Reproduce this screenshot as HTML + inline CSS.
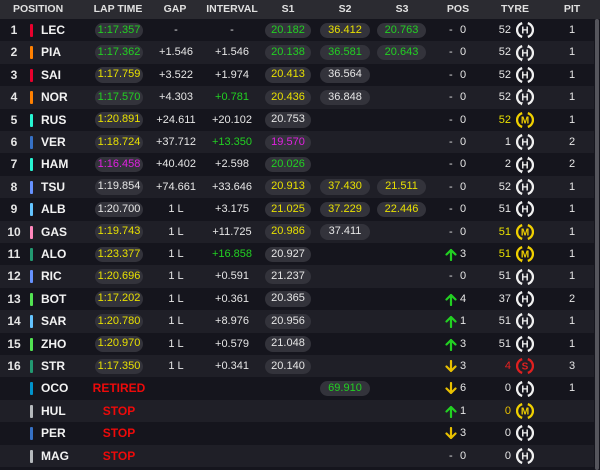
<!DOCTYPE html>
<html><head><meta charset="utf-8"><style>
*{margin:0;padding:0;box-sizing:border-box}
body{width:600px;height:470px;background:#15151d;font-family:"Liberation Sans",sans-serif;color:#e6e6e6;overflow:hidden;position:relative;font-size:11px}
.hdr{position:absolute;left:0;top:0;width:600px;height:19px;background:#2b2b31;font-weight:bold;font-size:10.5px;color:#e0e0e0}
.row{position:absolute;left:0;width:594px;height:22.4px}
.row.a{background:#15151d}.row.b{background:#1f1f27}
.c{position:absolute;top:0;height:100%;line-height:22.4px;white-space:nowrap}
.ctr{text-align:center}
.pill{position:absolute;top:3.5px;height:15.5px;line-height:15.5px;border-radius:8px;background:#33333b;text-align:center}
.bar{position:absolute;left:30px;top:5px;width:3px;height:13px;border-radius:1px}
.nm{left:41px;font-weight:bold;font-size:12px;color:#f2f2f2}
.num{left:5px;width:18px;text-align:center;font-weight:bold;font-size:12px}
.g{color:#22d022}.y{color:#e8e000}.p{color:#e020e0}.r{color:#e82020}.o{color:#e8c000}
.st{color:#ee0a0a;font-weight:bold;font-size:12px}
svg.t{position:absolute;top:2.2px;left:516px}
svg.ar{position:absolute;top:5px;left:445px}
.sb{position:absolute;left:595px;top:19px;width:4px;height:451px;background:#55555c;border-radius:2px}
</style></head><body>
<div class="hdr">
<span class="c" style="left:13px;line-height:19px">POSITION</span>
<span class="c ctr" style="left:88px;width:60px;line-height:19px">LAP TIME</span>
<span class="c ctr" style="left:150px;width:50px;line-height:19px">GAP</span>
<span class="c ctr" style="left:202px;width:60px;line-height:19px">INTERVAL</span>
<span class="c ctr" style="left:268px;width:40px;line-height:19px">S1</span>
<span class="c ctr" style="left:325px;width:40px;line-height:19px">S2</span>
<span class="c ctr" style="left:382px;width:40px;line-height:19px">S3</span>
<span class="c ctr" style="left:438px;width:40px;line-height:19px">POS</span>
<span class="c ctr" style="left:495px;width:40px;line-height:19px">TYRE</span>
<span class="c ctr" style="left:552px;width:40px;line-height:19px">PIT</span>
</div>
<div id="rows"></div>
<div class="sb"></div>
<script>
var D=[
["1","#e8002d","LEC","g:1:17.357","-","-","g:20.182","y:36.412","g:20.763","-","0","52","H",0,"1"],
["2","#ff8000","PIA","g:1:17.362","+1.546","+1.546","g:20.138","g:36.581","g:20.643","-","0","52","H",1,"1"],
["3","#e8002d","SAI","y:1:17.759","+3.522","+1.974","y:20.413","w:36.564","","-","0","52","H",0,"1"],
["4","#ff8000","NOR","g:1:17.570","+4.303","g:+0.781","y:20.436","w:36.848","","-","0","52","H",1,"1"],
["5","#27f4d2","RUS","y:1:20.891","+24.611","+20.102","w:20.753","","","-","0","y:52","M",0,"1"],
["6","#3671c6","VER","y:1:18.724","+37.712","g:+13.350","p:19.570","","","-","0","1","H",0,"2"],
["7","#27f4d2","HAM","p:1:16.458","+40.402","+2.598","g:20.026","","","-","0","2","H",1,"2"],
["8","#6692ff","TSU","w:1:19.854","+74.661","+33.646","y:20.913","y:37.430","y:21.511","-","0","52","H",0,"1"],
["9","#64c4ff","ALB","w:1:20.700","1 L","+3.175","y:21.025","y:37.229","y:22.446","-","0","51","H",0,"1"],
["10","#ff87bc","GAS","y:1:19.743","1 L","+11.725","y:20.986","w:37.411","","-","0","y:51","M",0,"1"],
["11","#229971","ALO","y:1:23.377","1 L","g:+16.858","w:20.927","","","u","3","y:51","M",1,"1"],
["12","#6692ff","RIC","y:1:20.696","1 L","+0.591","w:21.237","","","-","0","51","H",0,"1"],
["13","#52e252","BOT","y:1:17.202","1 L","+0.361","w:20.365","","","u","4","37","H",0,"2"],
["14","#64c4ff","SAR","y:1:20.780","1 L","+8.976","w:20.956","","","u","1","51","H",0,"1"],
["15","#52e252","ZHO","y:1:20.970","1 L","+0.579","w:21.048","","","u","3","51","H",0,"1"],
["16","#229971","STR","y:1:17.350","1 L","+0.341","w:20.140","","","d","3","r:4","S",0,"3"],
["","#0093cc","OCO","RETIRED","","","","g:69.910","","d","6","0","H",0,"1"],
["","#b6babd","HUL","STOP","","","","","","u","1","o:0","M",0,""],
["","#3671c6","PER","STOP","","","","","","d","3","0","H",0,""],
["","#b6babd","MAG","STOP","","","","","","-","0","0","H",0,""]];
function col(s){if(!s)return["",""];var i=s.indexOf(":");var k=s.slice(0,i);if(k.length==1&&"gypwro".indexOf(k)>=0)return[k,s.slice(i+1)];return["",s]}
function pill(s,l,w){if(!s)return"";var c=col(s);return '<span class="pill '+c[0]+'" style="left:'+l+'px;width:'+w+'px">'+c[1]+'</span>'}
function txt(s,l,w){var c=col(s);return '<span class="c ctr '+c[0]+'" style="left:'+l+'px;width:'+w+'px">'+c[1]+'</span>'}
function tyre(t,rot){var cl=t=="H"?"#f0f0f0":t=="M"?"#f0d000":"#e02020";
return '<svg class="t" width="18" height="18" viewBox="0 0 18 18"><path d="M6.2 2.1A7.2 7.2 0 0 0 6.2 15.9" fill="none" stroke="'+cl+'" stroke-width="2.3"/><path d="M11.8 2.1A7.2 7.2 0 0 1 11.8 15.9" fill="none" stroke="'+cl+'" stroke-width="2.3"/>'+(rot?'<path d="M12.5 0.5l2 3-3.4.4z M5.5 17.5l-2-3 3.4-.4z" fill="'+cl+'"/>':'')+'<text x="9" y="12.6" text-anchor="middle" font-family="Liberation Sans" font-weight="bold" font-size="10" fill="'+cl+'">'+t+'</text></svg>'}
function arrow(d){var up=d=="u";var cl=up?"#22d022":"#e8c000";
var p=up?"M6 12V2M1.5 6.5L6 2l4.5 4.5":"M6 1v10M1.5 6.5L6 11l4.5-4.5";
return '<svg class="ar" width="12" height="13" viewBox="0 0 12 13"><path d="'+p+'" fill="none" stroke="'+cl+'" stroke-width="2.2" stroke-linecap="round" stroke-linejoin="round"/></svg>'}
var h="";
D.forEach(function(r,i){var top=19+i*22.4;
h+='<div class="row '+(i%2?'b':'a')+'" style="top:'+top+'px">';
h+='<span class="c num">'+r[0]+'</span><span class="bar" style="background:'+r[1]+'"></span><span class="c nm">'+r[2]+'</span>';
if(r[3]=="RETIRED"||r[3]=="STOP")h+='<span class="c ctr st" style="left:84px;width:70px">'+r[3]+'</span>';else h+=pill(r[3],95,48);
h+=txt(r[4],150,52)+txt(r[5],204,56);
h+=pill(r[6],265,46)+pill(r[7],320,50)+pill(r[8],377,49);
var a=(r[9]=="u"||r[9]=="d")?arrow(r[9]):'<span class="c" style="left:449px">-</span>';
h+=a+'<span class="c" style="left:460px">'+r[10]+'</span>';
var tn=col(r[11]);h+='<span class="c '+tn[0]+'" style="left:479px;width:32px;text-align:right">'+tn[1]+'</span>'+tyre(r[12],r[13]);
h+='<span class="c ctr" style="left:557px;width:30px">'+r[14]+'</span></div>';});
document.getElementById("rows").innerHTML=h;
</script>
</body></html>
